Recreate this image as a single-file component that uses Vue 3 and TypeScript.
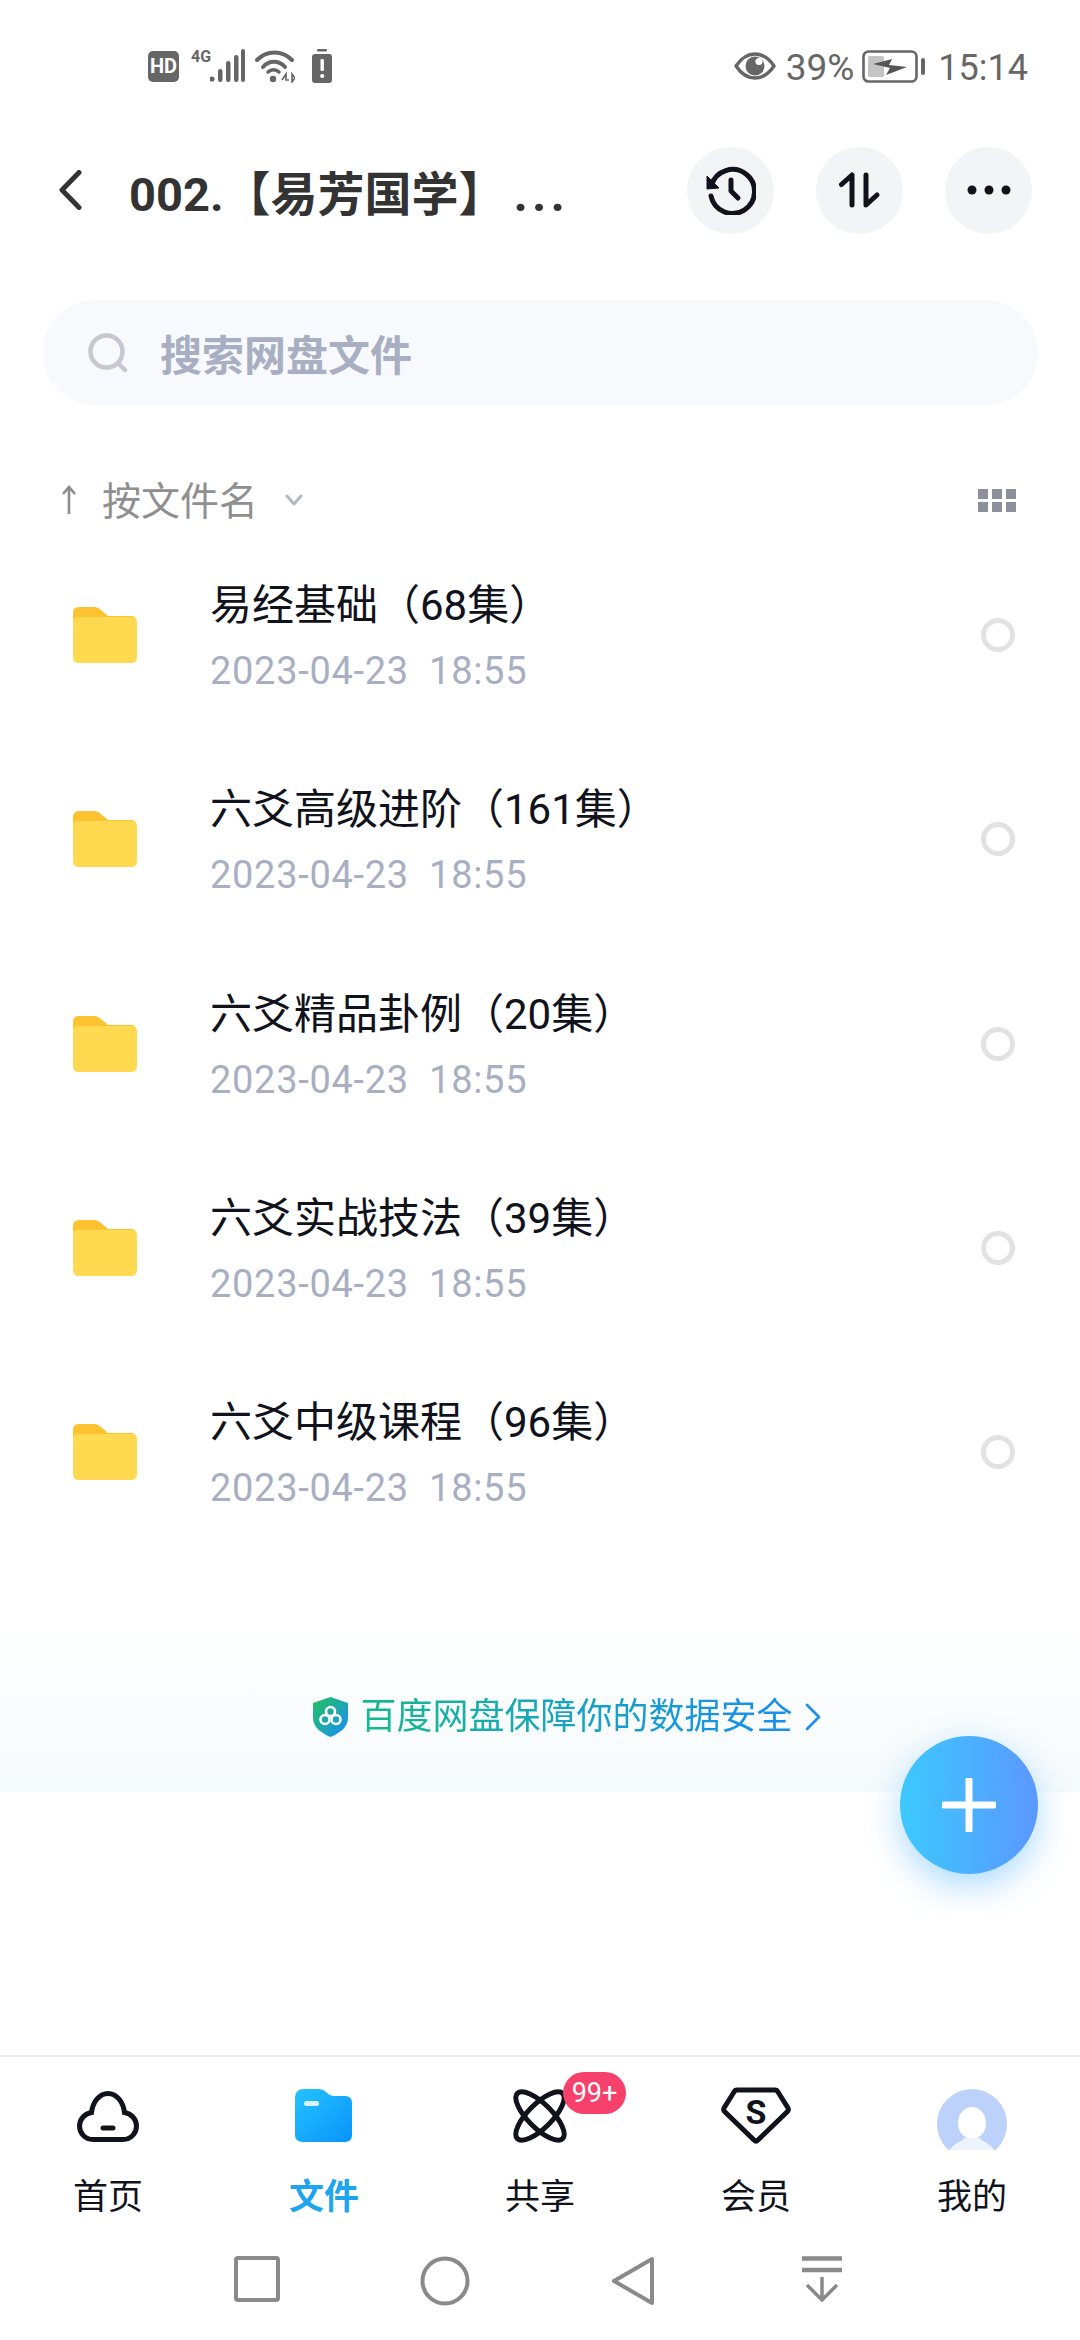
<script setup lang="ts">
interface Folder { name: string; time: string }
const folders: Folder[] = [
  { name: '易经基础（68集）', time: '2023-04-23  18:55' },
  { name: '六爻高级进阶（161集）', time: '2023-04-23  18:55' },
  { name: '六爻精品卦例（20集）', time: '2023-04-23  18:55' },
  { name: '六爻实战技法（39集）', time: '2023-04-23  18:55' },
  { name: '六爻中级课程（96集）', time: '2023-04-23  18:55' },
]
</script>

<template>
  <div class="page">
    <div class="status">
      <div class="status-left">
        <div class="hd">HD</div>
        <span class="g4">4G</span>
        <svg class="signal" width="35" height="34" viewBox="19 0 35 34">
          <circle cx="21" cy="30" r="2.6" fill="#666" />
          <rect x="27" y="20" width="4.5" height="13" rx="2.2" fill="#666" />
          <rect x="35" y="12" width="4.5" height="21" rx="2.2" fill="#666" />
          <rect x="43" y="6" width="4.5" height="27" rx="2.2" fill="#666" />
          <rect x="50" y="0" width="4" height="33" rx="2" fill="#666" />
        </svg>
        <svg class="wifi" width="40" height="34" viewBox="0 0 40 34">
          <path d="M2 11C12 1 27 1 37 11" fill="none" stroke="#666" stroke-width="4" stroke-linecap="round" />
          <path d="M8 18C14 11 24 11 30 18" fill="none" stroke="#666" stroke-width="4" stroke-linecap="round" />
          <path d="M13 23C16 20 21 20 24 23" fill="none" stroke="#666" stroke-width="3.5" stroke-linecap="round" />
          <circle cx="18" cy="30" r="3.2" fill="#666" />
          <path d="M27 31L31 25V31H34M37 25V33L40 29Z" fill="none" stroke="#666" stroke-width="1.6" />
        </svg>
        <svg class="batt-alert" width="20" height="34" viewBox="0 0 20 34">
          <rect x="5" y="0" width="10" height="2.5" rx="1" fill="#666" />
          <rect x="0" y="5" width="20" height="29" rx="3" fill="#666" />
          <rect x="8.5" y="10" width="3.4" height="12" rx="1.2" fill="#fff" />
          <circle cx="10.2" cy="27" r="2.1" fill="#fff" />
        </svg>
      </div>
      <div class="status-right">
        <svg width="42" height="28" viewBox="0 0 42 28">
          <path d="M2 14C8 5 14 2 21 2S34 5 40 14C34 23 28 26 21 26S8 23 2 14Z" fill="none" stroke="#666" stroke-width="3.4" stroke-linejoin="round" />
          <circle cx="21" cy="14" r="9.5" fill="#666" />
          <circle cx="25" cy="9.5" r="3.6" fill="#fff" />
        </svg>
        <span class="pct">39%</span>
        <svg class="battery" width="64" height="33" viewBox="0 0 64 33">
          <rect x="1.5" y="1.5" width="53" height="30" rx="5" fill="#fff" stroke="#666" stroke-width="2.6" />
          <rect x="6" y="6" width="16" height="21" rx="1.5" fill="#c4c4c4" />
          <path d="M11 14L30 9L27 15L45 17L24 25L28 18Z" fill="#555" />
          <rect x="59" y="8" width="4" height="17" rx="2" fill="#666" />
        </svg>
        <span class="clock">15:14</span>
      </div>
    </div>

    <div class="header">
      <svg class="back" width="24" height="40" viewBox="0 0 24 40">
        <path d="M21 2.5L4 20L21 37.5" fill="none" stroke="#333" stroke-width="5" stroke-linecap="round" stroke-linejoin="round" />
      </svg>
      <div class="title">002.【易芳国学】<span class="dots">...</span></div>
      <div class="round-btn">
        <svg width="50" height="50" viewBox="0 0 50 50">
          <path d="M5.5 20A22 22 0 1 1 5 31" fill="none" stroke="#10121c" stroke-width="5" stroke-linecap="round" />
          <path d="M1 11L13 23L1 24Z" fill="#10121c" stroke="#10121c" stroke-width="1" stroke-linejoin="round" />
          <path d="M25 15V26L32 33" fill="none" stroke="#10121c" stroke-width="5" stroke-linecap="round" stroke-linejoin="round" />
        </svg>
      </div>
      <div class="round-btn">
        <svg width="42" height="36" viewBox="0 0 42 36">
          <path d="M2.5 12.5L13 3V33" fill="none" stroke="#10121c" stroke-width="5" stroke-linecap="round" stroke-linejoin="round" />
          <path d="M27 3V33L38 23" fill="none" stroke="#10121c" stroke-width="5" stroke-linecap="round" stroke-linejoin="round" />
        </svg>
      </div>
      <div class="round-btn">
        <svg width="44" height="10" viewBox="0 0 44 10">
          <circle cx="5" cy="5" r="4.5" fill="#10121c" />
          <circle cx="22" cy="5" r="4.5" fill="#10121c" />
          <circle cx="39" cy="5" r="4.5" fill="#10121c" />
        </svg>
      </div>
    </div>

    <div class="search">
      <svg width="40" height="40" viewBox="0 0 40 40">
        <circle cx="18.5" cy="18.5" r="16" fill="none" stroke="#c5c8d0" stroke-width="4.5" />
        <path d="M30 30L37 37" stroke="#c5c8d0" stroke-width="4.5" stroke-linecap="round" />
      </svg>
      <span>搜索网盘文件</span>
    </div>

    <div class="sort">
      <svg width="18" height="30" viewBox="0 0 18 30">
        <path d="M9 2V29M3 9L9 2L15 9" fill="none" stroke="#8c8c8c" stroke-width="2.6" />
      </svg>
      <span class="sort-text">按文件名</span>
      <svg class="sort-chev" width="18" height="12" viewBox="0 0 18 12">
        <path d="M2 2L9 10L16 2" fill="none" stroke="#b5b8bf" stroke-width="3" stroke-linecap="round" stroke-linejoin="round" />
      </svg>
      <div class="grid-icon">
        <i v-for="n in 6" :key="n"></i>
      </div>
    </div>

    <div class="list">
      <div v-for="f in folders" :key="f.name" class="row">
        <svg class="folder" width="64" height="56" viewBox="0 0 64 56">
          <path d="M0 6Q0 0 6 0H21Q25 0 28 3L35 9H58Q63 9 63 14V30H0Z" fill="#fdc22f" />
          <path d="M0 15Q0 10 5 10H58Q64 10 64 15V50Q64 56 58 56H6Q0 56 0 50Z" fill="#ffd94f" />
        </svg>
        <div class="row-text">
          <div class="row-name">{{ f.name }}</div>
          <div class="row-time">{{ f.time }}</div>
        </div>
        <div class="radio"></div>
      </div>
    </div>

    <div class="banner">
      <svg width="37" height="40" viewBox="0 0 37 40">
        <defs>
          <linearGradient id="shieldGrad" x1="0" y1="0" x2="1" y2="1">
            <stop offset="0" stop-color="#22c45a" />
            <stop offset="1" stop-color="#1a8cff" />
          </linearGradient>
        </defs>
        <path d="M18.5 0L36 6V21C36 30 28 36 18.5 40C9 36 1 30 1 21V6Z" fill="url(#shieldGrad)" />
        <g fill="none" stroke="#fff" stroke-width="2.6">
          <circle cx="18.5" cy="14.5" r="4.5" />
          <circle cx="13" cy="22.5" r="4.5" />
          <circle cx="24" cy="22.5" r="4.5" />
        </g>
      </svg>
      <span class="banner-text">百度网盘保障你的数据安全</span>
      <svg width="18" height="28" viewBox="0 0 18 28">
        <path d="M3 2L15 14L3 26" fill="none" stroke="#1f8ff0" stroke-width="2.8" stroke-linecap="round" stroke-linejoin="round" />
      </svg>
    </div>

    <div class="fab">
      <svg width="54" height="54" viewBox="0 0 54 54">
        <path d="M27 2V52M2 27H52" stroke="#fff" stroke-width="7" stroke-linecap="round" />
      </svg>
    </div>

    <div class="fill"></div>

    <div class="tabbar">
      <div class="tab">
        <div class="tab-icon">
          <svg width="62" height="51" viewBox="0 0 62 51">
            <path d="M16 48.5H46C54 48.5 59.5 42 59.5 35C59.5 28 54 22.5 47.5 21.5C46 10 39 2.5 31 2.5C23 2.5 16 10 14.5 21.5C8 22.5 2.5 28 2.5 35C2.5 42 8 48.5 16 48.5Z" fill="none" stroke="#10121c" stroke-width="5" />
            <path d="M26 37H36" stroke="#10121c" stroke-width="5" stroke-linecap="round" />
          </svg>
        </div>
        <span>首页</span>
      </div>
      <div class="tab active">
        <div class="tab-icon">
          <svg width="58" height="54" viewBox="0 0 58 54">
            <defs>
              <linearGradient id="fileGrad" x1="0" y1="0" x2="1" y2="1">
                <stop offset="0" stop-color="#25c3ff" />
                <stop offset="1" stop-color="#0893fb" />
              </linearGradient>
            </defs>
            <path d="M0 9Q0 0 9 0H24Q28 0 31 3Q35 7 39 7H50Q57 7 57 14V46Q57 53 50 53H8Q0 53 0 46Z" fill="url(#fileGrad)" />
            <rect x="9" y="12" width="15" height="5" rx="2.5" fill="#d8f3ff" />
          </svg>
        </div>
        <span>文件</span>
      </div>
      <div class="tab">
        <div class="tab-icon">
          <svg width="54" height="54" viewBox="0 0 54 54">
            <g fill="none" stroke="#10121c" stroke-width="5">
              <ellipse cx="27" cy="27" rx="12" ry="32" transform="rotate(45 27 27)" />
              <ellipse cx="27" cy="27" rx="12" ry="32" transform="rotate(-45 27 27)" />
            </g>
          </svg>
          <span class="badge">99+</span>
        </div>
        <span>共享</span>
      </div>
      <div class="tab">
        <div class="tab-icon">
          <svg width="72" height="60" viewBox="0 0 72 60">
            <path d="M17 4H55Q57 4 58 6L68 22Q69 24 67 26L38 54Q36 56 34 54L5 26Q3 24 4 22L14 6Q15 4 17 4Z" fill="none" stroke="#10121c" stroke-width="5" stroke-linejoin="round" />
            <text x="36" y="38" text-anchor="middle" class="vip-s">S</text>
          </svg>
        </div>
        <span>会员</span>
      </div>
      <div class="tab">
        <div class="tab-icon avatar-wrap">
          <svg width="70" height="64" viewBox="0 0 70 64">
            <defs>
              <clipPath id="avatarClip"><rect x="0" y="0" width="70" height="61" /></clipPath>
            </defs>
            <g clip-path="url(#avatarClip)">
              <circle cx="35" cy="35" r="35" fill="#bcd2fa" />
              <ellipse cx="35" cy="34" rx="14" ry="16" fill="#fff" />
              <path d="M11 64C15 55 24 53 28 49H42C46 53 55 55 59 64Z" fill="#eef4fe" />
            </g>
          </svg>
        </div>
        <span>我的</span>
      </div>
    </div>

    <div class="navbar">
      <svg class="nav-square" width="46" height="46" viewBox="0 0 46 46">
        <rect x="2" y="2" width="42" height="42" rx="2" fill="none" stroke="#8a8a8a" stroke-width="4" />
      </svg>
      <svg class="nav-circle" width="50" height="50" viewBox="0 0 50 50">
        <circle cx="25" cy="25" r="22.5" fill="none" stroke="#8a8a8a" stroke-width="4" />
      </svg>
      <svg class="nav-back" width="44" height="50" viewBox="0 0 44 50">
        <path d="M41 3V47L3 25Z" fill="none" stroke="#8a8a8a" stroke-width="4" stroke-linejoin="round" />
      </svg>
      <svg class="nav-drop" width="42" height="46" viewBox="0 0 42 46">
        <path d="M1 2.5H41M1 14H41" stroke="#8a8a8a" stroke-width="4.5" />
        <path d="M21 21V44M6 29L21 44L36 29" fill="none" stroke="#8a8a8a" stroke-width="3.5" />
      </svg>
    </div>
  </div>
</template>

<style scoped>
.page {
  position: relative;
  width: 1080px;
  height: 2340px;
  background: #fff;
  display: flex;
  flex-direction: column;
  overflow: hidden;
  font-family: Roboto, "Noto Sans CJK SC", sans-serif;
}
.status {
  height: 132px;
  display: flex;
  align-items: center;
  justify-content: space-between;
  padding: 0 52px 0 148px;
  box-sizing: border-box;
  color: #666;
}
.status-left, .status-right { display: flex; align-items: center; }
.hd {
  width: 31px;
  height: 31px;
  border-radius: 5px;
  background: #666;
  color: #fff;
  font-size: 20px;
  font-weight: 700;
  text-align: center;
  line-height: 31px;
}
.g4 {
  width: 19px;
  margin-left: 12px;
  align-self: flex-start;
  font-size: 16px;
  line-height: 16px;
  font-weight: 700;
  color: #666;
  white-space: nowrap;
}
.wifi { margin-left: 10px; }
.batt-alert { margin-left: 17px; }
.pct { font-size: 37px; margin-left: 10px; margin-top: 3px; }
.battery { margin-left: 8px; }
.clock { font-size: 36px; margin-left: 12px; margin-top: 3px; }
.header {
  height: 116px;
  display: flex;
  align-items: center;
  padding: 0 48px 0 58px;
}
.back { flex: none; }
.title {
  flex: 1;
  margin-left: 47px;
  font-size: 47px;
  font-weight: 700;
  color: #333;
  white-space: nowrap;
}
.dots { letter-spacing: 4px; margin-left: 8px; font-size: 50px; }
.round-btn {
  flex: none;
  width: 87px;
  height: 87px;
  border-radius: 50%;
  background: #f3f4f5;
  display: flex;
  align-items: center;
  justify-content: center;
  margin-left: 42px;
}
.search {
  margin: 52px 42px 0 43px;
  height: 105px;
  border-radius: 52px;
  background: #f7f9fc;
  display: flex;
  align-items: center;
  padding-left: 45px;
  gap: 32px;
  font-size: 42px;
  font-weight: 700;
  color: #a9afc2;
}
.sort {
  margin-top: 62px;
  height: 66px;
  display: flex;
  align-items: center;
  padding: 0 64px 0 60px;
}
.sort-text { margin-left: 24px; font-size: 39px; color: #8f8f8f; margin-top: -5px; }
.sort-chev { margin-left: 27px; }
.grid-icon {
  margin-left: auto;
  width: 38px;
  display: grid;
  grid-template-columns: repeat(3, 10px);
  grid-template-rows: repeat(2, 10px);
  gap: 3px 4px;
}
.grid-icon i { background: #8d8f9b; }
.row {
  height: 204.3px;
  display: flex;
  align-items: center;
  padding: 0 65px 0 73px;
}
.folder { flex: none; }
.row-text { flex: 1; margin-left: 73px; margin-top: -1px; }
.row-name { font-size: 42px; line-height: 60px; color: #10121c; }
.row-time {
  margin-top: 13px;
  font-size: 38px;
  letter-spacing: 0.7px;
  line-height: 44px;
  color: #a9afc2;
  white-space: pre;
}
.radio {
  flex: none;
  width: 34px;
  height: 34px;
  box-sizing: border-box;
  border-radius: 50%;
  border: 5px solid #e2e2e2;
}
.banner {
  margin-top: 65px;
  height: 173px;
  flex: none;
  display: flex;
  align-items: center;
  justify-content: center;
  gap: 11px;
  padding: 22px 0 0 54px;
  box-sizing: border-box;
  background: linear-gradient(180deg, #ffffff 0%, #f5fafc 100%);
}
.banner-text {
  font-size: 36px;
  line-height: 44px;
  background: linear-gradient(90deg, #17b98d, #1a8df2);
  -webkit-background-clip: text;
  background-clip: text;
  color: transparent;
}
.fab {
  position: absolute;
  left: 900px;
  top: 1736px;
  width: 138px;
  height: 138px;
  border-radius: 50%;
  background: linear-gradient(90deg, #3cc9ff, #5b98ff);
  box-shadow: 0 12px 34px rgba(60, 170, 255, 0.42);
  display: flex;
  align-items: center;
  justify-content: center;
}
.fill { flex: 1; }
.tabbar {
  flex: none;
  height: 196px;
  border-top: 2px solid #eeeeee;
  box-sizing: border-box;
  display: grid;
  grid-template-columns: repeat(5, 216px);
}
.tab {
  display: flex;
  flex-direction: column;
  align-items: center;
  font-size: 35px;
  color: #10121c;
}
.tab > span { line-height: 44px; margin-top: 1px; }
.tab.active { color: #1ea5ef; font-weight: 700; }
.tab-icon {
  position: relative;
  height: 118px;
  display: flex;
  align-items: center;
  justify-content: center;
}
.avatar-wrap svg { margin-top: 10px; }
.tab-icon .badge {
  position: absolute;
  left: 50px;
  top: 15px;
  width: 63px;
  height: 42px;
  border-radius: 21px;
  background: #f6416c;
  color: #fff;
  font-size: 27px;
  line-height: 42px;
  font-weight: 400;
  text-align: center;
}
.vip-s { font-size: 34px; font-weight: 700; fill: #10121c; font-family: Roboto, sans-serif; }
.navbar {
  flex: none;
  height: 89px;
  display: flex;
  align-items: flex-start;
  padding: 5px 0 0 234px;
  box-sizing: border-box;
}
.nav-circle { margin-left: 140px; }
.nav-back { margin-left: 141px; }
.nav-drop { margin-left: 146px; }
</style>

<style>
html, body { margin: 0; background: #fff; }
</style>
